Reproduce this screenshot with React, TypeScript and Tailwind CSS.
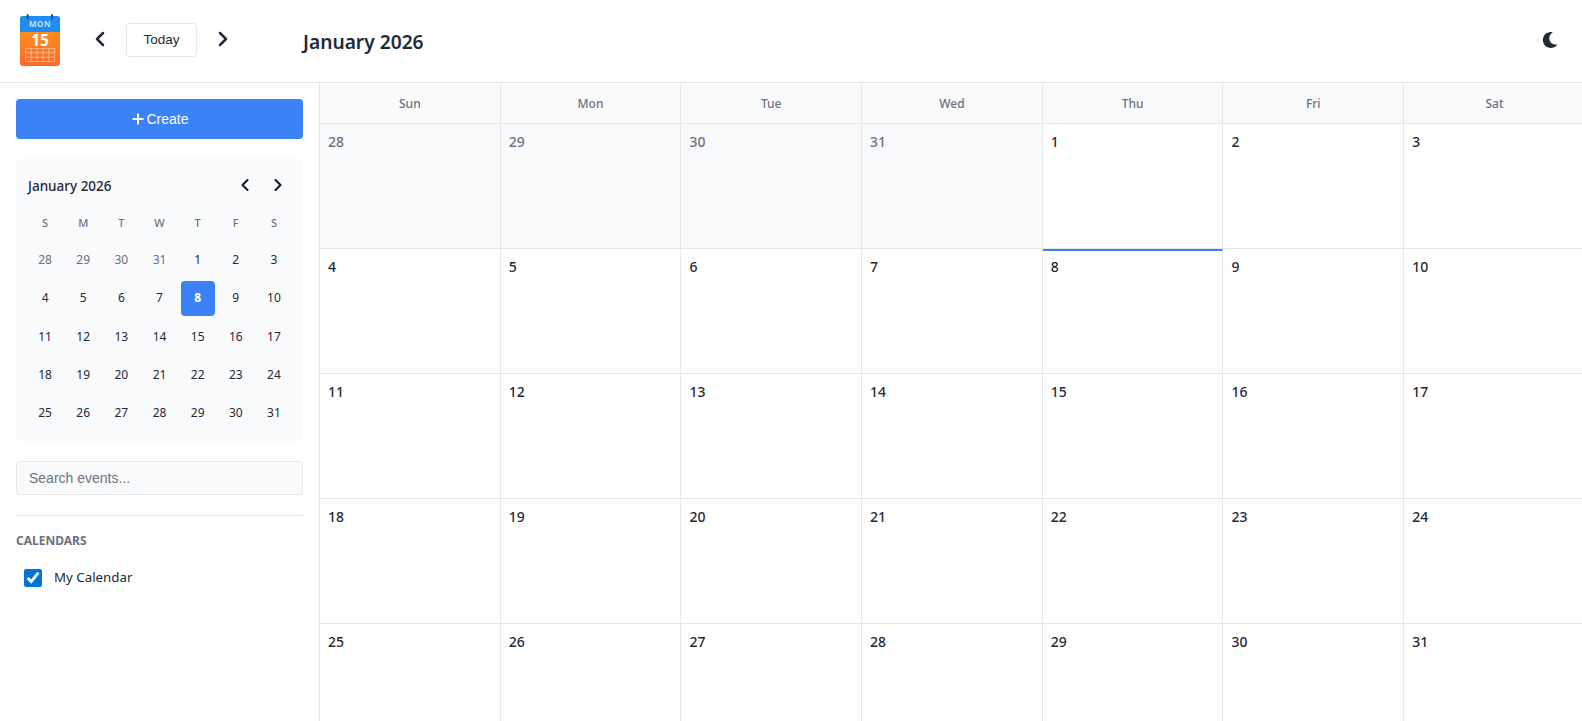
import { ChevronLeft, ChevronRight, Plus } from 'lucide-react';
import { FaMoon } from 'react-icons/fa';

const weekdays = ['Sun', 'Mon', 'Tue', 'Wed', 'Thu', 'Fri', 'Sat'];
const miniWeekdays = ['S', 'M', 'T', 'W', 'T', 'F', 'S'];

// December tail, then January 2026
const days = [
  ...[28, 29, 30, 31].map((day) => ({ day, muted: true })),
  ...Array.from({ length: 31 }, (_, i) => ({ day: i + 1, muted: false })),
];

function Logo() {
  return (
    <svg width="40" height="54" viewBox="0 0 40 54" className="shrink-0">
      <defs>
        <linearGradient id="logoBody" x1="0" y1="0" x2="0" y2="1">
          <stop offset="0" stopColor="#ff9f1f" />
          <stop offset="1" stopColor="#fb682c" />
        </linearGradient>
      </defs>
      <rect x="0" y="2" width="40" height="50" rx="3" fill="url(#logoBody)" />
      <path d="M0 18V5a3 3 0 0 1 3-3h34a3 3 0 0 1 3 3v13z" fill="#1e8cf2" />
      <rect x="6.7" y="0" width="2" height="5.5" rx="1" fill="#2a4ea8" />
      <rect x="31" y="0" width="2" height="5.5" rx="1" fill="#2a4ea8" />
      <text x="20" y="12.7" textAnchor="middle" fontSize="8" fontWeight="600" letterSpacing="0.6" fill="#d8ecff" fontFamily="Noto Sans, sans-serif">
        MON
      </text>
      <text x="20" y="31.5" textAnchor="middle" fontSize="15.5" fontWeight="700" fill="#fff" fontFamily="Noto Sans, sans-serif">
        15
      </text>
      <g stroke="#ffd2b0" strokeWidth="0.6" fill="none">
        <rect x="5.3" y="34.3" width="29.4" height="13.4" />
        <path d="M5.3 38.8h29.4M5.3 43.2h29.4M11.2 34.3v13.4M17.1 34.3v13.4M23 34.3v13.4M28.9 34.3v13.4" />
      </g>
    </svg>
  );
}

function MiniCalendar() {
  return (
    <div className="mt-5 rounded-md bg-[#f9fafb] p-3 pb-[11px]">
      <div className="mb-1 flex h-[30px] items-center justify-between">
        <span className="text-[13.5px] font-medium text-[#1f2937]">January 2026</span>
        <div className="mb-0.5 flex items-center gap-[13px] pr-[3px] text-[#111827]">
          <ChevronLeft size={20} strokeWidth={2.5} />
          <ChevronRight size={20} strokeWidth={2.5} />
        </div>
      </div>
      <div className="grid grid-cols-7 gap-1">
        {miniWeekdays.map((d, i) => (
          <div key={i} className="flex h-[34px] items-center justify-center pt-0.5 text-[11px] font-medium text-[#6b7280]">
            {d}
          </div>
        ))}
        {days.map(({ day, muted }, i) => (
          <div
            key={i}
            className={`flex h-[34.25px] items-center justify-center rounded text-xs ${
              day === 8 && !muted
                ? 'bg-[#3b82f6] font-bold text-white'
                : muted
                  ? 'text-[#6b7280]'
                  : 'text-[#1f2937]'
            }`}
          >
            {day}
          </div>
        ))}
      </div>
    </div>
  );
}

function Sidebar() {
  return (
    <aside className="w-[320px] shrink-0 border-r border-[#e5e7eb] p-4">
      <button className="flex h-10 w-full items-center justify-center rounded bg-[#3b82f6] font-['Liberation_Sans',sans-serif] text-sm text-white">
        <Plus size={16} strokeWidth={3} />
        Create
      </button>

      <MiniCalendar />

      <input
        placeholder="Search events..."
        className="mt-5 block h-[34px] w-full rounded border border-[#e5e7eb] bg-[#f9fafb] px-3 font-['Liberation_Sans',sans-serif] text-sm text-[#1f2937] placeholder:text-[#6b7280]"
      />

      <div className="mt-5 border-t border-[#e5e7eb] pt-[17px]">
        <h3 className="text-xs font-bold text-[#6b7280]">CALENDARS</h3>
        <label className="mt-[19px] flex items-center gap-3 pl-2">
          <input type="checkbox" defaultChecked className="m-0 h-[18px] w-[18px] accent-[#0075d4]" />
          <span className="text-[13.3px] text-[#1f2937]">My Calendar</span>
        </label>
      </div>
    </aside>
  );
}

function MonthGrid() {
  return (
    <main className="min-w-0 flex-1">
      <div className="grid grid-cols-[repeat(7,180.7px)]">
        {weekdays.map((d) => (
          <div
            key={d}
            className="flex h-[41px] items-center justify-center border-r border-b border-[#e5e7eb] bg-[#f9fafb] pt-0.5 text-xs font-medium text-[#6b7280] last:border-r-0"
          >
            {d}
          </div>
        ))}
      </div>
      <div className="grid grid-cols-[repeat(7,180.7px)]">
        {days.map(({ day, muted }, i) => {
          const today = day === 8 && !muted;
          return (
            <div
              key={i}
              className={`h-[125px] border-r border-b border-[#e5e7eb] p-2 text-sm font-medium [&:nth-child(7n)]:border-r-0 ${
                muted ? 'bg-[#f9fafb] text-[#6b7280]' : 'text-[#1f2937]'
              } ${today ? 'border-t-2 border-t-[#3b82f6] pt-1.5' : ''}`}
            >
              {day}
            </div>
          );
        })}
      </div>
    </main>
  );
}

export default function App() {
  return (
    <div className="flex h-screen flex-col overflow-hidden bg-white font-['Noto_Sans',sans-serif]">
      <header className="flex h-[83px] shrink-0 items-center border-b border-[#e5e7eb] pr-6 pl-5">
        <Logo />
        <div className="mb-0.5 ml-7 flex items-center gap-3.5 text-[#1f2937]">
          <ChevronLeft size={24} strokeWidth={2.5} className="mb-0.5" />
          <button className="h-[34px] w-[71px] rounded border border-[#e5e7eb] font-['Liberation_Sans',sans-serif] text-[13.5px] text-[#1f2937]">
            Today
          </button>
          <ChevronRight size={24} strokeWidth={2.5} className="mb-0.5" />
        </div>
        <h1 className="mt-0.5 ml-[68px] text-[19.2px] font-semibold text-[#1f2937]">January 2026</h1>
        <FaMoon size={16} className="mb-0.5 ml-auto text-[#1f2937]" />
      </header>
      <div className="flex min-h-0 flex-1">
        <Sidebar />
        <MonthGrid />
      </div>
    </div>
  );
}
